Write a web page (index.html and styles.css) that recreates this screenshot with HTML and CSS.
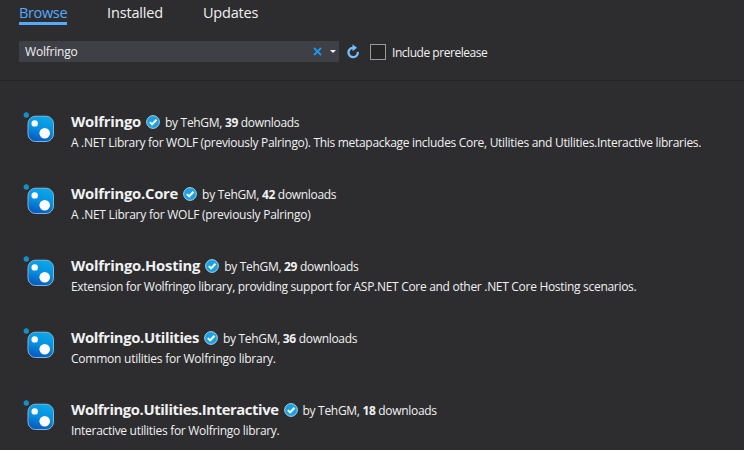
FILE: index.html
```html
<!DOCTYPE html>
<html lang="en">
<head>
<meta charset="utf-8">
<title>NuGet Package Manager</title>
<link rel="stylesheet" href="styles.css">
</head>
<body>
<svg class="defs" width="0" height="0" aria-hidden="true">
  <defs>
    <linearGradient id="blue" x1=".6" y1="0" x2=".35" y2="1">
      <stop offset="0" stop-color="#08a8ea"/><stop offset=".5" stop-color="#078fe0"/><stop offset="1" stop-color="#0558c0"/>
    </linearGradient>
    <symbol id="package" viewBox="0 0 32 32">
      <circle cx="3.3" cy="3" r="2.5" fill="#0794d2" stroke="#3f86ae" stroke-width=".5"/>
      <rect x="5" y="4.2" width="25.5" height="25.3" rx="7.5" fill="url(#blue)" stroke="#82b6d8" stroke-width="1"/>
      <circle cx="11.7" cy="11.4" r="3.2" fill="#fff"/>
      <circle cx="21.7" cy="21.2" r="5.3" fill="#fff"/>
    </symbol>
    <symbol id="verified" viewBox="0 0 14 14">
      <circle cx="7" cy="7" r="6.4" fill="#1ba1e2" stroke="#c9e6f5" stroke-width=".8"/>
      <path d="M3.8 7.1 6.1 9.4 10.5 4.7" fill="none" stroke="#fff" stroke-width="2"/>
    </symbol>
  </defs>
</svg>
<header class="toolbar">
  <nav class="tabs">
    <a class="tab tab-active">Browse</a>
    <a class="tab tab-installed">Installed</a>
    <a class="tab tab-updates">Updates</a>
  </nav>
  <div class="search-row">
    <div class="search">
      <span class="query">Wolfringo</span>
      <svg class="clear" width="9" height="9" viewBox="0 0 9 9"><path d="M1 1 8 8M8 1 1 8" stroke="#1c97ea" stroke-width="1.8"/></svg>
      <svg class="caret" width="6" height="3" viewBox="0 0 6 3"><path d="M0 0H6L3 3Z" fill="#f1f1f1"/></svg>
    </div>
    <svg class="refresh" width="14" height="15" viewBox="0 0 14 15"><path d="M7.5 3.8H6.8A4.7 4.7 0 1 0 11.8 7.8" fill="none" stroke="#75beff" stroke-width="2.3"/><path d="M6.5 .3 11 3.8 6.5 7.3Z" fill="#75beff"/></svg>
    <span class="checkbox"></span>
    <span class="label">Include prerelease</span>
  </div>
</header>
<main class="packages">
  <article class="package">
    <svg class="icon"><use href="#package"/></svg>
    <div class="info">
      <div class="heading"><h2 class="name">Wolfringo</h2><svg class="verified"><use href="#verified"/></svg><span class="meta">by TehGM, <b>39</b> downloads</span></div>
      <p class="description long">A .NET Library for WOLF (previously Palringo). This metapackage includes Core, Utilities and Utilities.Interactive libraries.</p>
    </div>
  </article>
  <article class="package">
    <svg class="icon"><use href="#package"/></svg>
    <div class="info">
      <div class="heading"><h2 class="name">Wolfringo.Core</h2><svg class="verified"><use href="#verified"/></svg><span class="meta">by TehGM, <b>42</b> downloads</span></div>
      <p class="description">A .NET Library for WOLF (previously Palringo)</p>
    </div>
  </article>
  <article class="package">
    <svg class="icon"><use href="#package"/></svg>
    <div class="info">
      <div class="heading"><h2 class="name">Wolfringo.Hosting</h2><svg class="verified"><use href="#verified"/></svg><span class="meta">by TehGM, <b>29</b> downloads</span></div>
      <p class="description long">Extension for Wolfringo library, providing support for ASP.NET Core and other .NET Core Hosting scenarios.</p>
    </div>
  </article>
  <article class="package">
    <svg class="icon"><use href="#package"/></svg>
    <div class="info">
      <div class="heading"><h2 class="name name-snug">Wolfringo.Utilities</h2><svg class="verified"><use href="#verified"/></svg><span class="meta">by TehGM, <b>36</b> downloads</span></div>
      <p class="description">Common utilities for Wolfringo library.</p>
    </div>
  </article>
  <article class="package">
    <svg class="icon"><use href="#package"/></svg>
    <div class="info">
      <div class="heading"><h2 class="name name-wide">Wolfringo.Utilities.Interactive</h2><svg class="verified"><use href="#verified"/></svg><span class="meta">by TehGM, <b>18</b> downloads</span></div>
      <p class="description long">Interactive utilities for Wolfringo library.</p>
    </div>
  </article>
</main>
</body>
</html>
```
FILE: styles.css
```css
* { box-sizing: border-box; }
body {
  margin: 0;
  height: 450px;
  overflow: hidden;
  background: #2d2d30;
  color: #f1f1f1;
  font: 12px/16px "Open Sans", "Noto Sans", sans-serif;
  white-space: nowrap;
}
.defs { display: block; }
.toolbar { height: 81px; padding: 3px 19px 0; border-bottom: 1px solid #222224; }
.tabs { display: flex; gap: 40px; height: 38px; }
.tab { height: 22px; width: 48px; font-size: 14.5px; line-height: 20px; letter-spacing: -.35px; }
.tab-active { color: #55aaff; border-bottom: 3px solid #55aaff; }
.tab-installed { width: 56px; letter-spacing: -.15px; }
.tab-updates { letter-spacing: -.2px; }
.search-row { display: flex; align-items: center; height: 21px; }
.search { display: flex; align-items: center; width: 320px; height: 21px; padding: 0 3px 0 6px; background: #3f3f46; }
.query { flex: 1; letter-spacing: -.2px; }
.caret { margin-left: 8px; }
.refresh { margin: 0 10px 0 7px; }
.checkbox { width: 16px; height: 16px; border: 1px solid #999; background: #252526; }
.label { margin-left: 6px; padding-top: 2px; letter-spacing: -.46px; }
.packages { padding: 31px 0 0 23px; }
.package { display: flex; height: 72px; }
.icon { width: 32px; height: 32px; margin-right: 16px; }
.heading { display: flex; align-items: center; height: 20px; }
.name { margin: 0; padding-bottom: 2px; font-size: 14.8px; line-height: 20px; font-weight: 700; letter-spacing: -.24px; }
.name-snug { letter-spacing: -.35px; }
.name-wide { letter-spacing: -.4px; }
.verified { width: 14px; height: 14px; margin: 0 5px 0; }
.meta { letter-spacing: -.31px; padding-top: 2px; }
.description { margin: 3px 0 0; letter-spacing: -.24px; }
.long { letter-spacing: -.3px; }
```
